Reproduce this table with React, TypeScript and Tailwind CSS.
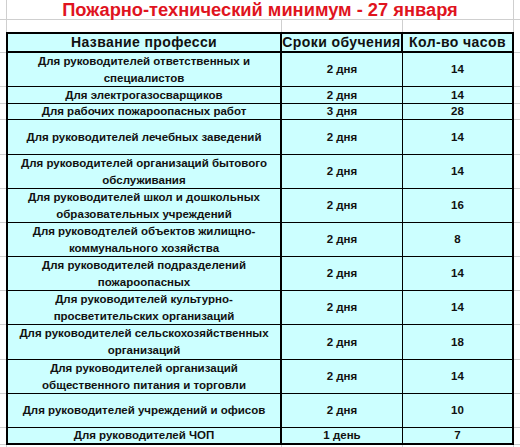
import React from "react";

type Row = { name: React.ReactNode; term: string; hours: string; h: string };

const rows: Row[] = [
  { name: <>Для руководителей ответственных и<br />специалистов</>, term: "2 дня", hours: "14", h: "h-[34px]" },
  { name: "Для электрогазосварщиков", term: "2 дня", hours: "14", h: "h-[17px]" },
  { name: "Для рабочих пожароопасных работ", term: "3 дня", hours: "28", h: "h-[16px]" },
  { name: "Для руководителей лечебных заведений", term: "2 дня", hours: "14", h: "h-[35px]" },
  { name: <>Для руководителей организаций бытового<br />обслуживания</>, term: "2 дня", hours: "14", h: "h-[34px]" },
  { name: <>Для руководителей школ и дошкольных<br />образовательных учреждений</>, term: "2 дня", hours: "16", h: "h-[34px]" },
  { name: <>Для руководтелей объектов жилищно-<br />коммунального хозяйства</>, term: "2 дня", hours: "8", h: "h-[34px]" },
  { name: <>Для руководителей подразделений<br />пожароопасных</>, term: "2 дня", hours: "14", h: "h-[34px]" },
  { name: <>Для руководителей культурно-<br />просветительских организаций</>, term: "2 дня", hours: "14", h: "h-[34px]" },
  { name: <>Для руководителей сельскохозяйственных<br />организаций</>, term: "2 дня", hours: "18", h: "h-[35px]" },
  { name: <>Для руководителей организаций<br />общественного питания и торговли</>, term: "2 дня", hours: "14", h: "h-[34px]" },
  { name: "Для руководителей учреждений и офисов", term: "2 дня", hours: "10", h: "h-[34px]" },
  { name: "Для руководителей ЧОП", term: "1 день", hours: "7", h: "h-[17px]" },
];

const cell = "flex items-center justify-center text-center bg-[#ccffff] border-black";

export default function App() {
  return (
    <div className="w-[520px] h-[447px] overflow-hidden bg-white font-['Liberation_Sans',Arial,sans-serif] text-[#111]">
      {/* title row */}
      <div className="flex h-[20px]">
        <div className="w-[7px] border-r border-b border-[#cfcfcf]" />
        <div className="w-[507px] border-r border-b border-[#cfcfcf] flex items-center justify-center">
          <h1 className="text-[18.3px] leading-[19px] font-bold text-[#e0141e]">
            Пожарно-технический минимум - 27 января
          </h1>
        </div>
        <div className="flex-1 border-b border-[#cfcfcf]" />
      </div>
      {/* empty row */}
      <div className="flex h-[12px]">
        <div className="w-[7px] border-r border-[#cfcfcf]" />
        <div className="w-[275px] border-r border-[#cfcfcf]" />
        <div className="w-[121px] border-r border-[#cfcfcf]" />
        <div className="w-[111px] border-r border-[#cfcfcf]" />
        <div className="flex-1" />
      </div>
      {/* header */}
      <div className="flex h-[21px] text-[14px] font-bold tracking-[0.4px]">
        <div className="w-[6px] border-b border-[#cfcfcf]" />
        <div className={`${cell} w-[276px] border-2`}>Название професси</div>
        <div className={`${cell} w-[121px] border-y-2 border-r-2`}>Сроки обучения</div>
        <div className={`${cell} w-[111px] border-y-2 border-r-2`}>Кол-во часов</div>
        <div className="flex-1 border-b border-[#cfcfcf]" />
      </div>
      {rows.map((r, i) => {
        const last = i === rows.length - 1;
        return (
          <div key={i} className={`flex ${r.h} text-[11.5px] leading-[17px] font-bold`}>
            <div className="w-[6px] border-b border-[#cfcfcf]" />
            <div className={`${cell} w-[276px] border-x-2 ${last ? "border-b-2" : "border-b"}`}>{r.name}</div>
            <div className={`${cell} w-[121px] border-r ${last ? "border-b-2" : "border-b"}`}>{r.term}</div>
            <div className={`${cell} w-[111px] border-r-2 ${last ? "border-b-2" : "border-b"}`}>{r.hours}</div>
            <div className="flex-1 border-b border-[#cfcfcf]" />
          </div>
        );
      })}
      <div className="flex h-[10px]">
        <div className="w-[7px] border-r border-[#cfcfcf]" />
        <div className="w-[275px] border-r border-[#cfcfcf]" />
        <div className="w-[121px] border-r border-[#cfcfcf]" />
        <div className="w-[111px] border-r border-[#cfcfcf]" />
        <div className="flex-1" />
      </div>
    </div>
  );
}
